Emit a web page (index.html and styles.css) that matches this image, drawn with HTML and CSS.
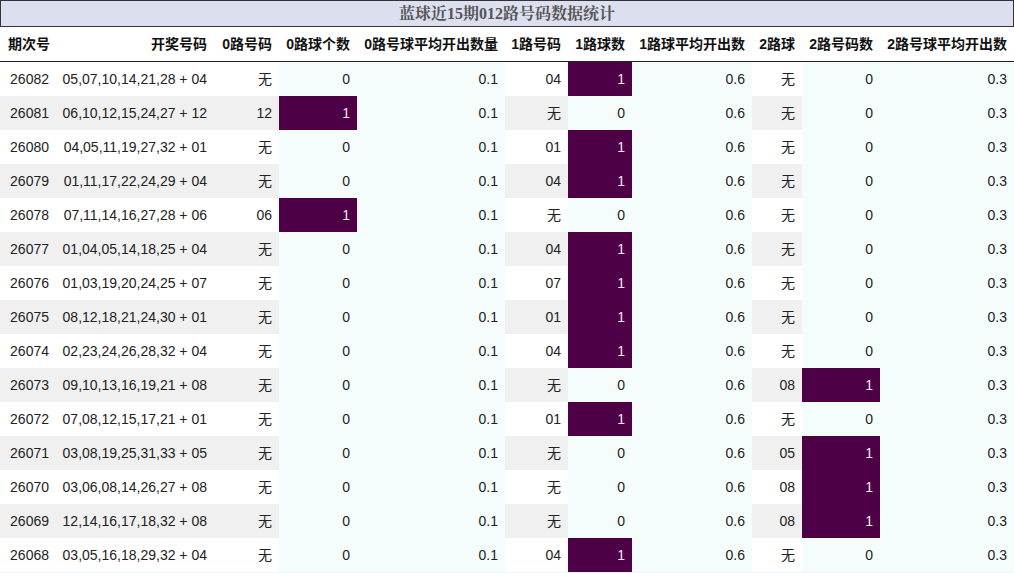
FILE: index.html
```html
<!DOCTYPE html>
<html lang="zh">
<head>
<meta charset="utf-8">
<title>蓝球近15期012路号码数据统计</title>
<link rel="stylesheet" href="styles.css">
</head>
<body>
<table class="stats">
<caption class="title">蓝球近15期012路号码数据统计</caption>
<colgroup>
<col class="w56"><col class="w158"><col class="w65"><col class="w78"><col class="w148"><col class="w63"><col class="w64"><col class="w120"><col class="w50"><col class="w78"><col class="w134">
</colgroup>
<thead>
<tr><th>期次号</th><th>开奖号码</th><th>0路号码</th><th>0路球个数</th><th>0路号球平均开出数量</th><th>1路号码</th><th>1路球数</th><th>1路球平均开出数</th><th>2路球</th><th>2路号码数</th><th>2路号球平均开出数</th></tr>
</thead>
<tbody>
<tr><td>26082</td><td>05,07,10,14,21,28 + 04</td><td>无</td><td class="az">0</td><td class="az">0.1</td><td>04</td><td class="hi">1</td><td class="az">0.6</td><td>无</td><td class="az">0</td><td class="az">0.3</td></tr>
<tr><td>26081</td><td>06,10,12,15,24,27 + 12</td><td>12</td><td class="hi">1</td><td class="az">0.1</td><td>无</td><td class="az">0</td><td class="az">0.6</td><td>无</td><td class="az">0</td><td class="az">0.3</td></tr>
<tr><td>26080</td><td>04,05,11,19,27,32 + 01</td><td>无</td><td class="az">0</td><td class="az">0.1</td><td>01</td><td class="hi">1</td><td class="az">0.6</td><td>无</td><td class="az">0</td><td class="az">0.3</td></tr>
<tr><td>26079</td><td>01,11,17,22,24,29 + 04</td><td>无</td><td class="az">0</td><td class="az">0.1</td><td>04</td><td class="hi">1</td><td class="az">0.6</td><td>无</td><td class="az">0</td><td class="az">0.3</td></tr>
<tr><td>26078</td><td>07,11,14,16,27,28 + 06</td><td>06</td><td class="hi">1</td><td class="az">0.1</td><td>无</td><td class="az">0</td><td class="az">0.6</td><td>无</td><td class="az">0</td><td class="az">0.3</td></tr>
<tr><td>26077</td><td>01,04,05,14,18,25 + 04</td><td>无</td><td class="az">0</td><td class="az">0.1</td><td>04</td><td class="hi">1</td><td class="az">0.6</td><td>无</td><td class="az">0</td><td class="az">0.3</td></tr>
<tr><td>26076</td><td>01,03,19,20,24,25 + 07</td><td>无</td><td class="az">0</td><td class="az">0.1</td><td>07</td><td class="hi">1</td><td class="az">0.6</td><td>无</td><td class="az">0</td><td class="az">0.3</td></tr>
<tr><td>26075</td><td>08,12,18,21,24,30 + 01</td><td>无</td><td class="az">0</td><td class="az">0.1</td><td>01</td><td class="hi">1</td><td class="az">0.6</td><td>无</td><td class="az">0</td><td class="az">0.3</td></tr>
<tr><td>26074</td><td>02,23,24,26,28,32 + 04</td><td>无</td><td class="az">0</td><td class="az">0.1</td><td>04</td><td class="hi">1</td><td class="az">0.6</td><td>无</td><td class="az">0</td><td class="az">0.3</td></tr>
<tr><td>26073</td><td>09,10,13,16,19,21 + 08</td><td>无</td><td class="az">0</td><td class="az">0.1</td><td>无</td><td class="az">0</td><td class="az">0.6</td><td>08</td><td class="hi">1</td><td class="az">0.3</td></tr>
<tr><td>26072</td><td>07,08,12,15,17,21 + 01</td><td>无</td><td class="az">0</td><td class="az">0.1</td><td>01</td><td class="hi">1</td><td class="az">0.6</td><td>无</td><td class="az">0</td><td class="az">0.3</td></tr>
<tr><td>26071</td><td>03,08,19,25,31,33 + 05</td><td>无</td><td class="az">0</td><td class="az">0.1</td><td>无</td><td class="az">0</td><td class="az">0.6</td><td>05</td><td class="hi">1</td><td class="az">0.3</td></tr>
<tr><td>26070</td><td>03,06,08,14,26,27 + 08</td><td>无</td><td class="az">0</td><td class="az">0.1</td><td>无</td><td class="az">0</td><td class="az">0.6</td><td>08</td><td class="hi">1</td><td class="az">0.3</td></tr>
<tr><td>26069</td><td>12,14,16,17,18,32 + 08</td><td>无</td><td class="az">0</td><td class="az">0.1</td><td>无</td><td class="az">0</td><td class="az">0.6</td><td>08</td><td class="hi">1</td><td class="az">0.3</td></tr>
<tr><td>26068</td><td>03,05,16,18,29,32 + 04</td><td>无</td><td class="az">0</td><td class="az">0.1</td><td>04</td><td class="hi">1</td><td class="az">0.6</td><td>无</td><td class="az">0</td><td class="az">0.3</td></tr>
</tbody>
</table>
</body>
</html>
```
FILE: styles.css
```css
html, body {
  margin: 0;
  padding: 0;
  background: #ffffff;
}

.stats {
  width: 1014px;
  border-collapse: collapse;
  table-layout: fixed;
  font-family: "Liberation Sans", "Noto Sans CJK SC", sans-serif;
  font-size: 14px;
  color: #222;
}

.title {
  font-family: "Liberation Serif", "Noto Serif CJK SC", "Noto Sans CJK SC", serif;
  font-weight: bold;
  font-size: 16px;
  line-height: 25px;
  color: #555;
  background: #dcdff0;
  border: 1px solid #333;
  text-align: center;
}

.w56 { width: 56px; }
.w158 { width: 158px; }
.w65 { width: 65px; }
.w78 { width: 78px; }
.w148 { width: 148px; }
.w63 { width: 63px; }
.w64 { width: 64px; }
.w120 { width: 120px; }
.w50 { width: 50px; }
.w134 { width: 134px; }

.stats th,
.stats td {
  padding: 7px 7px 7px 0;
  line-height: 20px;
  text-align: right;
  white-space: nowrap;
}

.stats th {
  font-weight: bold;
  color: #111;
  border-bottom: 1px solid #222;
}

.stats th:first-child {
  text-align: left;
  padding-left: 8px;
}

.stats tbody tr:nth-child(even) td {
  background: #f0f0f0;
}

.stats tbody tr td.az {
  background: #f5fcfc;
}

.stats tbody tr td.hi {
  background: #4e0047;
  color: #f3e6f0;
}

.stats tbody tr:last-child td {
  border-bottom: 1px solid #eef4f4;
}
```
